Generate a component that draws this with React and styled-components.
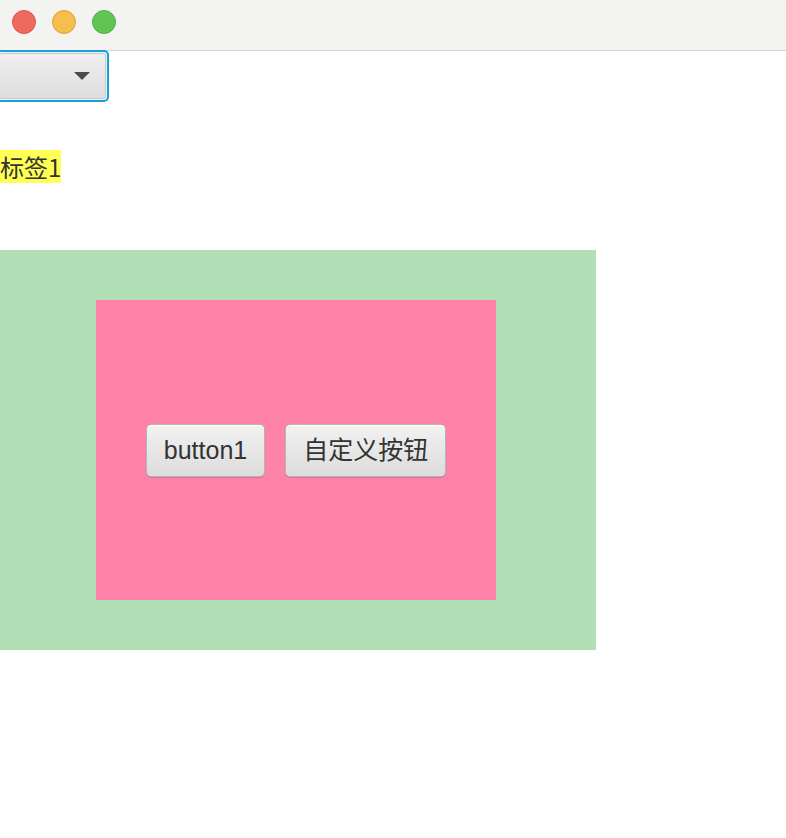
import React from "react";
import styled, { createGlobalStyle } from "styled-components";

const Global = createGlobalStyle`
  html, body {
    margin: 0;
    padding: 0;
    background: #ffffff;
    font-family: "Noto Sans CJK SC", "Noto Sans", sans-serif;
    overflow: hidden;
  }
`;

const Window = styled.div`
  width: 786px;
  height: 838px;
  display: flex;
  flex-direction: column;
  background: #ffffff;
`;

const TitleBar = styled.div`
  height: 51px;
  flex-shrink: 0;
  display: flex;
  align-items: center;
  gap: 16px;
  padding-left: 12px;
  background: #f3f3f2;
  border-bottom: 1px solid #d6d6d6;
  box-sizing: border-box;
`;

const Light = styled.span`
  width: 24px;
  height: 24px;
  border-radius: 50%;
  box-sizing: border-box;
  background: ${(p) => p.$fill};
  border: 1px solid ${(p) => p.$edge};
  margin-top: -6px;
`;

const Content = styled.div`
  display: flex;
  flex-direction: column;
  align-items: flex-start;
`;

const Combo = styled.div`
  margin-top: -1px;
  margin-left: -4px;
  width: 113px;
  height: 52px;
  box-sizing: border-box;
  border: 2px solid #1a9fd8;
  border-radius: 5px;
  padding: 1px;
  background: #e6f4fb;
`;

const ComboInner = styled.div`
  height: 100%;
  box-sizing: border-box;
  border-radius: 3px;
  border: 1px solid #c9c9c9;
  background: linear-gradient(#f0f0f0, #dedede);
  display: flex;
  align-items: center;
  justify-content: flex-end;
  padding-right: 15px;
`;

const Arrow = styled.span`
  width: 0;
  height: 0;
  border-left: 8px solid transparent;
  border-right: 8px solid transparent;
  border-top: 8px solid #4a4a4a;
`;

const Label = styled.span`
  margin-top: 48px;
  background: #ffff55;
  font-size: 24px;
  line-height: 33px;
  color: #333333;
`;

const Outer = styled.div`
  margin-top: 67px;
  width: 596px;
  height: 400px;
  box-sizing: border-box;
  padding: 50px 100px 50px 96px;
  background: #b1e0b6;
`;

const Inner = styled.div`
  width: 400px;
  height: 300px;
  background: #ff83a8;
  display: flex;
  align-items: center;
  justify-content: center;
  gap: 20px;
`;

const Button = styled.button`
  height: 53px;
  padding: 0 17px;
  box-sizing: border-box;
  border: 1px solid #b5b5b5;
  border-radius: 5px;
  background: linear-gradient(#f2f2f2, #dcdcdc);
  box-shadow: inset 0 1px 0 #ffffff, 0 1px 1px rgba(0, 0, 0, 0.15);
  font-family: "Liberation Sans", "Noto Sans CJK SC", sans-serif;
  font-size: 25px;
  color: #333333;
  line-height: 1;
`;

export default function App() {
  return (
    <Window>
      <Global />
      <TitleBar>
        <Light $fill="#ef6a5e" $edge="#d9564b" />
        <Light $fill="#f6bd4f" $edge="#dca23a" />
        <Light $fill="#61c554" $edge="#4fad43" />
      </TitleBar>
      <Content>
        <Combo>
          <ComboInner>
            <Arrow />
          </ComboInner>
        </Combo>
        <Label>标签1</Label>
        <Outer>
          <Inner>
            <Button>button1</Button>
            <Button>自定义按钮</Button>
          </Inner>
        </Outer>
      </Content>
    </Window>
  );
}
